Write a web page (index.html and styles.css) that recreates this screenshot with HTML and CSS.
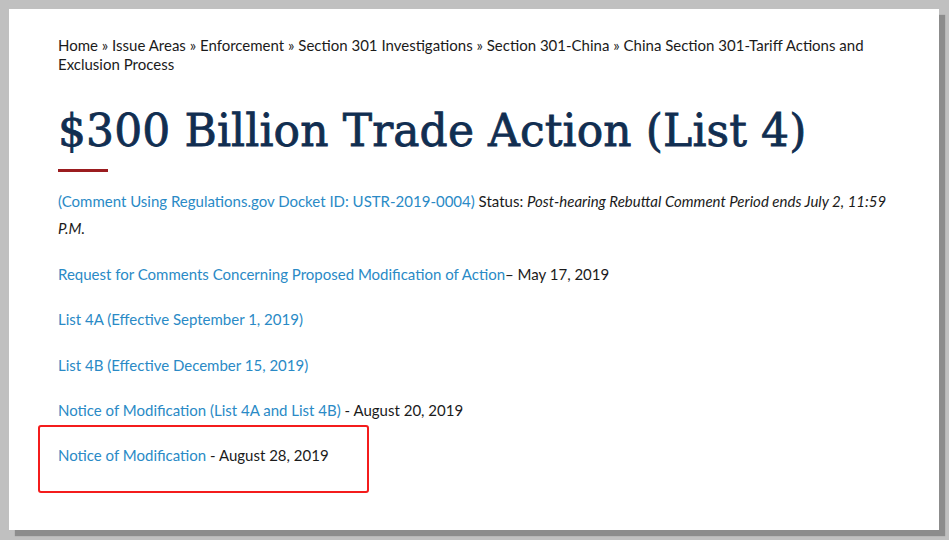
FILE: index.html
```html
<!DOCTYPE html>
<html lang="en">
<head>
    <link rel="stylesheet" href="styles.css">
</head>
<body>
    <div class="page">
        <div class="breadcrumb">
            <a href="#">Home</a> &raquo; <a href="#">Issue Areas</a> &raquo; <a href="#">Enforcement</a> &raquo; <a href="#">Section 301 Investigations</a> &raquo; <a href="#">Section 301-China</a> &raquo; <a href="#">China Section 301-Tariff Actions and Exclusion Process</a>
        </div>
        <h1>$300 Billion Trade Action (List 4)</h1>
        <div class="rule"></div>
        <p><a href="#">(Comment Using Regulations.gov Docket ID: USTR-2019-0004)</a> Status: <em>Post-hearing Rebuttal Comment Period ends July 2, 11:59 P.M.</em></p>
        <p><a href="#">Request for Comments Concerning Proposed Modification of Action</a>&ndash; May 17, 2019</p>
        <p><a href="#">List 4A (Effective September 1, 2019)</a></p>
        <p><a href="#">List 4B (Effective December 15, 2019)</a></p>
        <p><a href="#">Notice of Modification (List 4A and List 4B)</a> - August 20, 2019</p>
        <div class="highlight">
            <p><a href="#">Notice of Modification</a> - August 28, 2019</p>
        </div>
    </div>
</body>
</html>
```

FILE: styles.css
```css
body {
    margin: 0;
    background-color: #c0c0c0;
    font-family: Lato, "Open Sans", sans-serif;
    padding: 9px;
    height: 540px;
    box-sizing: border-box;
    overflow: hidden;
}
.page {
    background-color: #fff;
    width: 930px;
    height: 521px;
    box-sizing: border-box;
    padding: 27px 40px 0 49px;
    box-shadow: 6px 6px 1px #8c8c8c;
    color: #1b1b1b;
}
a {
    color: #2a8ac6;
    text-decoration: none;
}
.breadcrumb {
    font-size: 15px;
    line-height: 19px;
}
.breadcrumb a {
    color: #1b1b1b;
}
h1 {
    font-family: "DejaVu Serif", serif;
    font-weight: normal;
    font-size: 44px;
    line-height: 60px;
    letter-spacing: 0.1px;
    color: #112e51;
    -webkit-text-stroke: 0.8px #112e51;
    margin: 27px 0 0;
}
.rule {
    width: 50px;
    height: 3px;
    background-color: #9b1c1f;
    margin: 8px 0 16px;
}
p {
    font-size: 15px;
    line-height: 27px;
    margin: 0 0 18.5px;
}
.highlight {
    border: 2px solid #f41c1c;
    border-radius: 3px;
    width: 331px;
    height: 68px;
    box-sizing: border-box;
    margin: -18px 0 0 -20px;
    padding: 15px 0 0 18px;
}
.highlight p {
    margin: 0;
}
```
